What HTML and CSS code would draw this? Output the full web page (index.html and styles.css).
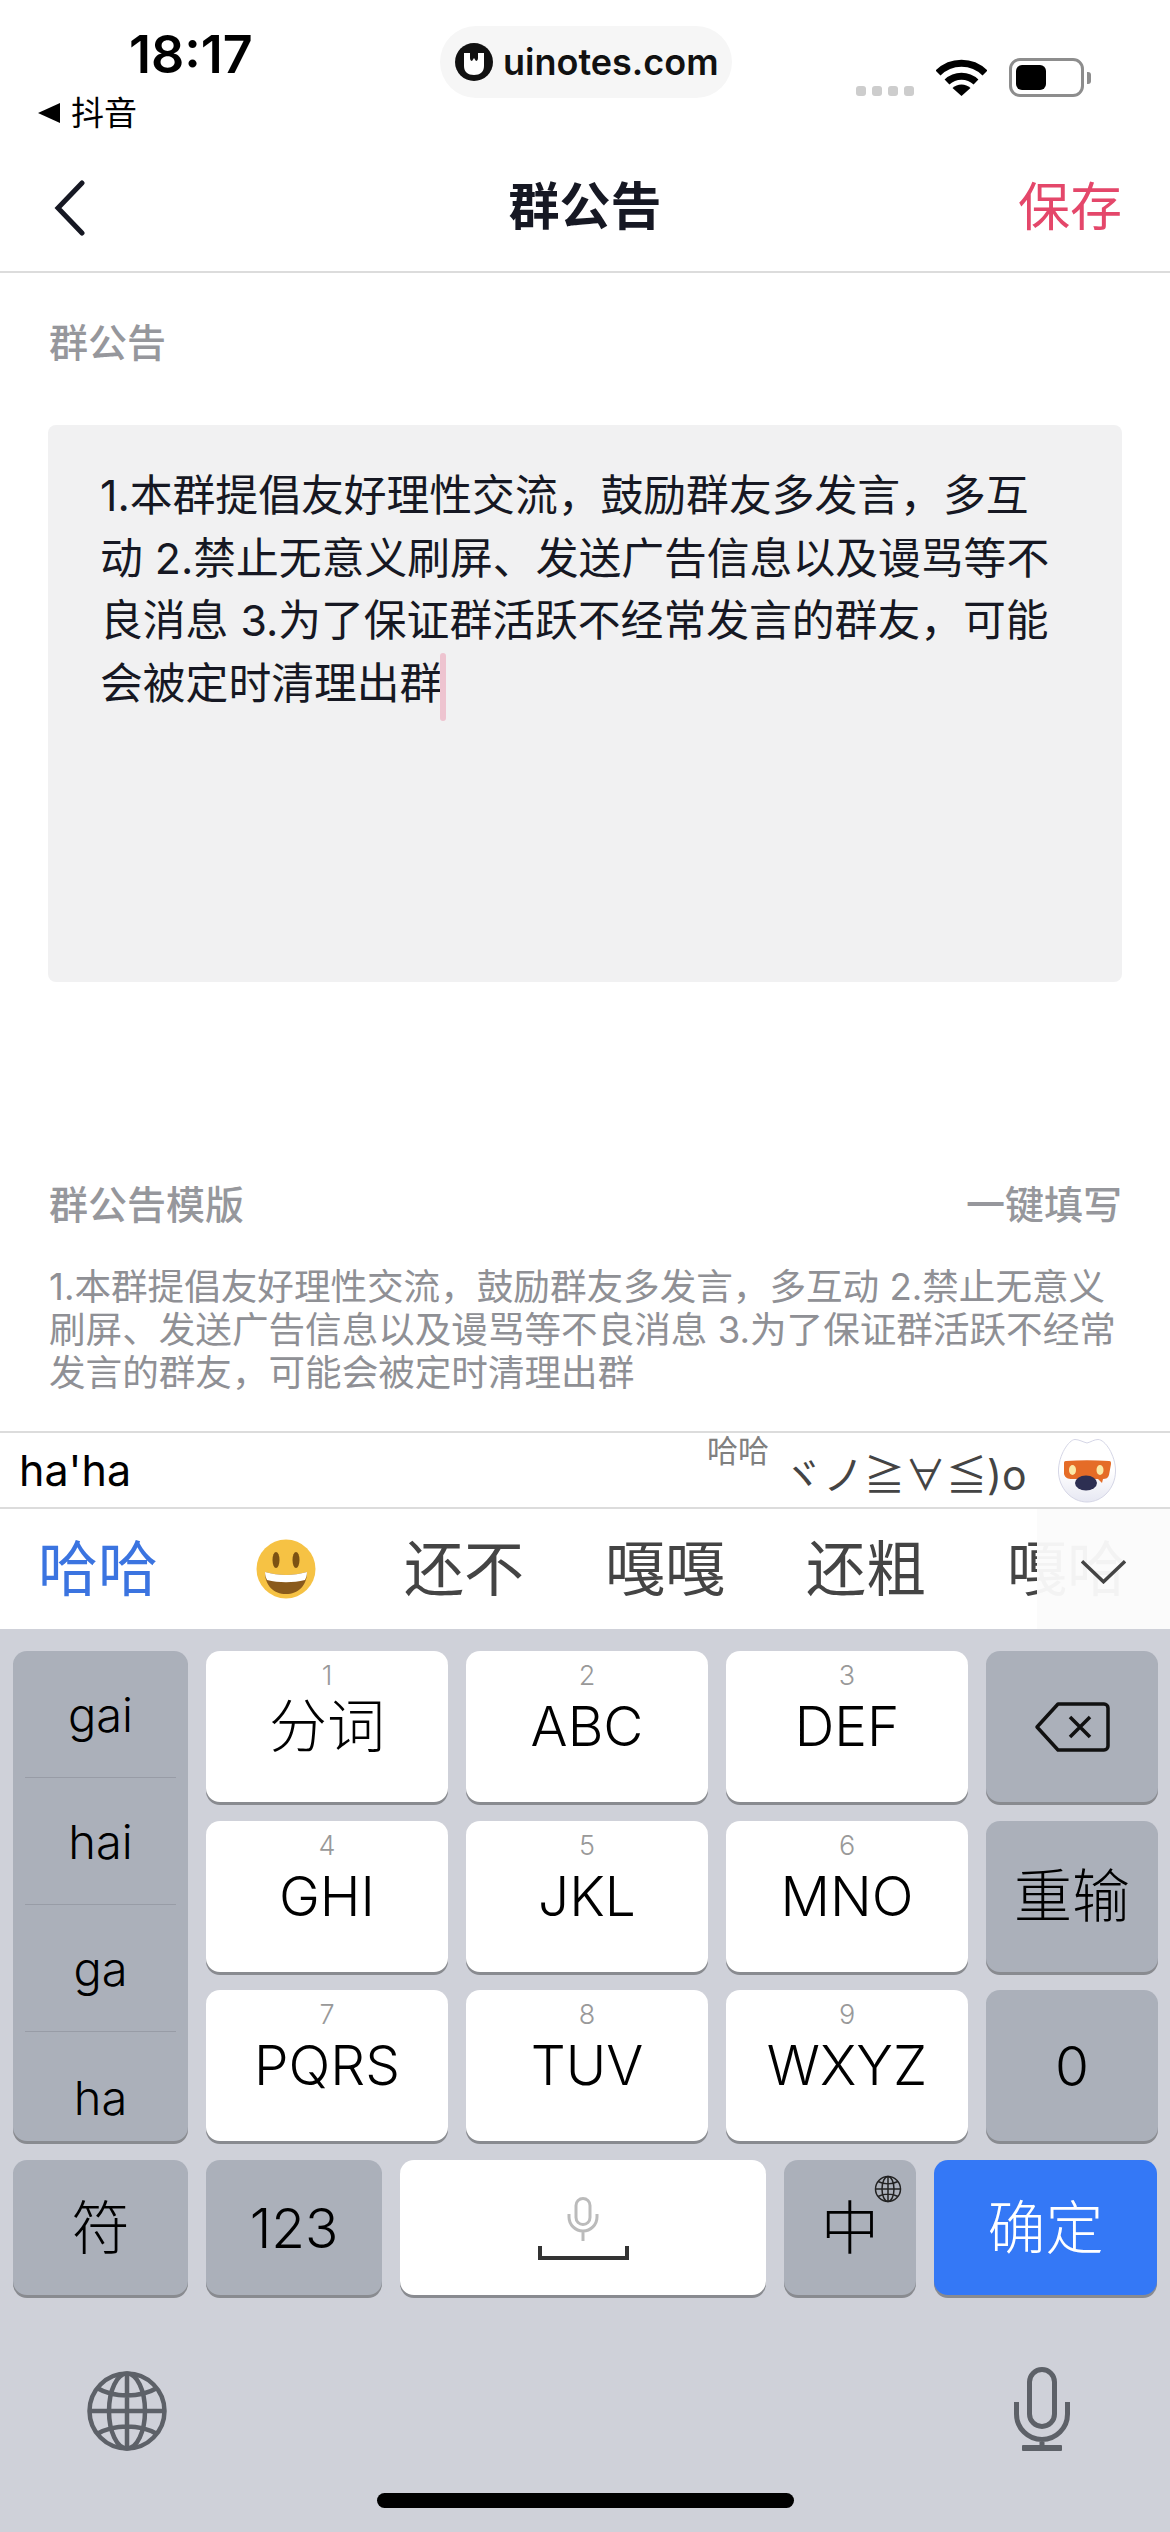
FILE: index.html
```html
<!DOCTYPE html>
<html lang="zh-CN">
  <head>
    <meta charset="UTF-8" />
    <title>群公告</title>
    <link rel="stylesheet" href="styles.css">
  </head>
  <body>
    <div class="status-bar">
      <div class="status-left">
        <div class="time">18:17</div>
        <div class="back-app"><span class="back-arrow"></span>抖音</div>
      </div>
      <div class="watermark">
        <svg class="wm-logo" viewBox="0 0 38 38">
          <circle cx="19" cy="19" r="19" fill="#111"/>
          <path d="M9 10h6v5c0 2 1 3 2 3l2-3 2 3c1 0 2-1 2-3v-5h6v13c0 6-4 9-10 9s-10-3-10-9z" fill="#fff"/>
        </svg>
        <span>uinotes.com</span>
      </div>
      <div class="status-right">
        <div class="signal"><i></i><i></i><i></i><i></i></div>
        <svg class="wifi" viewBox="0 0 51 37">
          <path d="M2 14a33 33 0 0 1 47 0" fill="none" stroke="#000" stroke-width="7"/>
          <path d="M11 23a21 21 0 0 1 29 0" fill="none" stroke="#000" stroke-width="7"/>
          <path d="M25.500 37l-9-8a13 13 0 0 1 18 0z" fill="#000"/>
        </svg>
        <div class="battery"><div class="battery-fill"></div></div>
        <div class="battery-nub"></div>
      </div>
    </div>

    <div class="nav">
      <svg class="nav-back" viewBox="0 0 32 56">
        <path d="M29 3L5 28l24 25" fill="none" stroke="#161823" stroke-width="5" stroke-linecap="round"/>
      </svg>
      <h1>群公告</h1>
      <span class="save">保存</span>
    </div>

    <div class="content">
      <div class="label">群公告</div>
      <div class="editor">1.本群提倡友好理性交流，鼓励群友多发言，多互动 2.禁止无意义刷屏、发送广告信息以及谩骂等不良消息 3.为了保证群活跃不经常发言的群友，可能会被定时清理出群<span class="caret"></span></div>
      <div class="template-head">
        <span class="label">群公告模版</span>
        <span class="label">一键填写</span>
      </div>
      <p class="template-text">1.本群提倡友好理性交流，鼓励群友多发言，多互动 2.禁止无意义刷屏、发送广告信息以及谩骂等不良消息 3.为了保证群活跃不经常发言的群友，可能会被定时清理出群</p>
    </div>

    <div class="compose">
      <span class="pinyin">ha'ha</span>
      <span class="kaomoji-tag">哈哈</span>
      <span class="kaomoji">ヾノ≧∀≦)o</span>
      <svg class="mascot" viewBox="0 0 58 64">
        <defs>
          <linearGradient id="mascotBody" x1="0" y1="0" x2="0" y2="1">
            <stop offset="0.500" stop-color="#fff"/>
            <stop offset="1" stop-color="#e6e7f2"/>
          </linearGradient>
        </defs>
        <path d="M29 4C25 3 21 .5 17 .5 11 .5 .5 16 .5 32c0 17 13 31 28.500 31S57.500 49 57.500 32C57.500 16 47 .5 40 .5 36 .5 33 3 29 4z" fill="url(#mascotBody)" stroke="#d5d6e6"/>
        <path d="M8 22c14-1 28-1 43 0 2 0 2 1 2 3l-2 11c-1 3-3 4-6 4l-1 4-4-4H14c-4 0-7-1-8-5L6 25c0-2 0-3 2-3z" fill="#e56c27"/>
        <ellipse cx="14.500" cy="31" rx="3.500" ry="5" fill="#fbe9a6"/>
        <ellipse cx="42" cy="31" rx="3.500" ry="5" fill="#fbe9a6"/>
        <ellipse cx="28" cy="44" rx="11" ry="7.500" fill="#2d2f52"/>
      </svg>
    </div>

    <div class="candidates">
      <span class="cand active">哈哈</span>
      <svg class="emoji" viewBox="0 0 62 60">
        <circle cx="31" cy="30" r="29.500" fill="#f6c244"/>
        <ellipse cx="21" cy="21" rx="3.500" ry="8" fill="#7d5213"/>
        <ellipse cx="41" cy="21" rx="3.500" ry="8" fill="#7d5213"/>
        <path d="M10 33c14 4 28 4 42 0 0 14-9 22-21 22S10 47 10 33z" fill="#8a5a1c"/>
        <path d="M10 33c14 4 28 4 42 0 0 3-1 6-2 8-12 3-26 3-38 0-1-2-2-5-2-8z" fill="#fff"/>
      </svg>
      <span class="cand">还不</span>
      <span class="cand">嘎嘎</span>
      <span class="cand">还粗</span>
      <span class="cand">嘎哈</span>
      <div class="cand-more">
        <svg viewBox="0 0 46 24">
          <path d="M1 1l22 21L45 1" fill="none" stroke="#444" stroke-width="3.500"/>
        </svg>
      </div>
    </div>

    <div class="keyboard">
      <div class="keys">
        <div class="syllables key-gray">
          <div class="syl">gai</div>
          <div class="syl">hai</div>
          <div class="syl">ga</div>
          <div class="syl">ha</div>
        </div>
        <div class="key"><small>1</small><b class="zh">分词</b></div>
        <div class="key"><small>2</small><b>ABC</b></div>
        <div class="key"><small>3</small><b>DEF</b></div>
        <div class="key-gray key-mid">
          <svg class="backspace" viewBox="0 0 76 50">
            <path d="M24 2h46a4 4 0 0 1 4 4v38a4 4 0 0 1-4 4H24L3 25z" fill="none" stroke="#111" stroke-width="3.500" stroke-linejoin="round"/>
            <path d="M36 15l20 20M56 15L36 35" fill="none" stroke="#111" stroke-width="3.500"/>
          </svg>
        </div>
        <div class="key"><small>4</small><b>GHI</b></div>
        <div class="key"><small>5</small><b>JKL</b></div>
        <div class="key"><small>6</small><b>MNO</b></div>
        <div class="key-gray key-mid"><b class="zh">重输</b></div>
        <div class="key"><small>7</small><b>PQRS</b></div>
        <div class="key"><small>8</small><b>TUV</b></div>
        <div class="key"><small>9</small><b>WXYZ</b></div>
        <div class="key-gray key-mid"><b>0</b></div>
      </div>
      <div class="bottom-row">
        <div class="key-gray key-mid k-sym"><b class="zh">符</b></div>
        <div class="key-gray key-mid k-num"><b>123</b></div>
        <div class="k-space">
          <svg class="space-mic" viewBox="0 0 32 44">
            <rect x="9" y="1.500" width="14" height="26" rx="7" fill="none" stroke="#bbb" stroke-width="3"/>
            <path d="M2 17v3a14 14 0 0 0 28 0v-3M16 34v10" fill="none" stroke="#bbb" stroke-width="3"/>
          </svg>
          <div class="space-bracket"></div>
        </div>
        <div class="key-gray key-mid k-lang">
          <b class="zh">中</b>
          <svg class="lang-globe" viewBox="0 0 28 28">
            <g fill="none" stroke="#222" stroke-width="1.500">
              <circle cx="14" cy="14" r="12.500"/>
              <ellipse cx="14" cy="14" rx="6" ry="12.500"/>
              <path d="M14 1.500v25M1.500 14h25M4 6.500c6 3 14 3 20 0M4 21.500c6-3 14-3 20 0"/>
            </g>
          </svg>
        </div>
        <div class="key-mid k-ok"><b class="zh">确定</b></div>
      </div>
      <div class="kb-tools">
        <svg class="tool-globe" viewBox="0 0 80 80">
          <g fill="none" stroke="#5d6168" stroke-width="4.500">
            <circle cx="40" cy="40" r="37.500"/>
            <ellipse cx="40" cy="40" rx="18" ry="37.500"/>
            <path d="M40 2.500v75M2.500 40h75M10 17c17 10 43 10 60 0M10 63c17-10 43-10 60 0"/>
          </g>
        </svg>
        <svg class="tool-mic" viewBox="0 0 56 84">
          <rect x="15.500" y="2.500" width="25" height="57" rx="12.500" fill="none" stroke="#5d6168" stroke-width="5"/>
          <path d="M2.500 35v12a25.500 25.500 0 0 0 51 0V35M28 72v8" fill="none" stroke="#5d6168" stroke-width="5"/>
          <rect x="8" y="78" width="40" height="6" rx="1" fill="#5d6168"/>
        </svg>
      </div>
      <div class="home-bar"></div>
    </div>
  </body>
</html>
```

FILE: styles.css
```css
* {
  box-sizing: border-box;
}

body {
  margin: 0;
  width: 1170px;
  height: 2532px;
  overflow: hidden;
  display: flex;
  flex-direction: column;
  background: #fff;
  color: #161823;
  font-family: Inter, "Noto Sans CJK SC", sans-serif;
}

/* status bar */
.status-bar {
  height: 132px;
  flex-shrink: 0;
  display: grid;
  grid-template-columns: 440px 292px 1fr;
  color: #000;
}

.status-left {
  padding: 26px 0 0 38px;
}

.time {
  margin-left: 91px;
  font-size: 52px;
  line-height: 58px;
  font-weight: 600;
}

.back-app {
  margin-top: 9px;
  display: flex;
  align-items: center;
  gap: 11px;
  font-size: 33px;
  line-height: 40px;
}

.back-arrow {
  width: 0;
  height: 0;
  border-top: 10px solid transparent;
  border-bottom: 10px solid transparent;
  border-right: 22px solid #000;
}

.watermark {
  margin-top: 26px;
  height: 72px;
  display: flex;
  align-items: center;
  padding-left: 15px;
  gap: 10px;
  border-radius: 36px;
  background: #f6f6f6;
  font-size: 36px;
  font-weight: 600;
  color: #111;
}

.wm-logo {
  width: 38px;
  height: 38px;
}

.status-right {
  padding: 58px 0 0 124px;
  display: flex;
  align-items: flex-start;
}

.signal {
  margin-top: 28px;
  display: flex;
  gap: 6px;
}

.signal i {
  width: 10px;
  height: 10px;
  border-radius: 3px;
  background: #cdcdcd;
}

.wifi {
  width: 51px;
  height: 37px;
  margin: 1px 0 0 22px;
}

.battery {
  width: 75px;
  height: 39px;
  margin-left: 22px;
  padding: 4px;
  border: 3px solid #8d8d8d;
  border-radius: 11px;
}

.battery-fill {
  width: 30px;
  height: 100%;
  border-radius: 6px;
  background: #000;
}

.battery-nub {
  width: 4px;
  height: 12px;
  margin: 14px 0 0 3px;
  border-radius: 0 3px 3px 0;
  background: #8d8d8d;
}

/* nav */
.nav {
  height: 141px;
  flex-shrink: 0;
  position: relative;
  display: flex;
  align-items: center;
  justify-content: center;
  padding-top: 10px;
  border-bottom: 2px solid #dcdcdc;
}

.nav h1 {
  margin: 0;
  font-size: 51px;
  line-height: 60px;
  font-weight: 700;
}

.nav-back {
  position: absolute;
  left: 53px;
  top: 48px;
  width: 32px;
  height: 56px;
}

.save {
  position: absolute;
  right: 48px;
  top: 46px;
  font-size: 52px;
  line-height: 60px;
  color: #e4476a;
}

/* content */
.content {
  flex: 1;
  padding: 0 48px;
}

.label {
  font-size: 39px;
  line-height: 46px;
  font-weight: 500;
  color: #96979c;
}

.content > .label {
  margin: 47px 0 0 1px;
}

.editor {
  height: 557px;
  margin-top: 59px;
  padding: 40px 70px 0 52px;
  border-radius: 8px;
  background: #f1f1f2;
  font-size: 42.800px;
  line-height: 62.500px;
}

.caret {
  display: inline-block;
  width: 6px;
  height: 68px;
  margin-left: -2px;
  vertical-align: middle;
  border-radius: 3px;
  background: #eec4d0;
}

.template-head {
  margin: 200px 0 0 1px;
  display: flex;
  justify-content: space-between;
}

.template-text {
  margin: 38px -4px 0 1px;
  font-size: 36.600px;
  line-height: 43px;
  color: #8f9095;
}

/* composition row */
.compose {
  height: 78px;
  flex-shrink: 0;
  position: relative;
  display: flex;
  align-items: center;
  padding-left: 19px;
  border-top: 2px solid #dcdcdc;
  border-bottom: 2px solid #dcdcdc;
  color: #000;
}

.pinyin {
  font-size: 43px;
}

.kaomoji-tag {
  position: absolute;
  left: 707px;
  top: -2px;
  font-size: 31px;
  line-height: 40px;
  color: #808080;
}

.kaomoji {
  position: absolute;
  left: 782px;
  top: 14px;
  font-size: 41px;
  line-height: 56px;
  color: #444;
}

.mascot {
  position: absolute;
  left: 1058px;
  top: 6px;
  width: 58px;
  height: 64px;
}

/* candidates */
.candidates {
  height: 120px;
  flex-shrink: 0;
  position: relative;
  overflow: hidden;
  display: flex;
  align-items: center;
  gap: 81px;
  padding-left: 38px;
}

.cand {
  flex-shrink: 0;
  font-size: 60px;
  line-height: 70px;
  color: #444;
}

.cand.active {
  color: #3b74e0;
}

.emoji {
  flex-shrink: 0;
  width: 62px;
  height: 60px;
  margin: 0 6px 0 16px;
}

.cand-more {
  position: absolute;
  left: 1037px;
  top: 0;
  bottom: 0;
  right: 0;
  display: flex;
  align-items: center;
  padding: 6px 0 0 44px;
  background: rgba(251, 251, 251, 0.96);
}

.cand-more svg {
  width: 45px;
  height: 24px;
}

/* keyboard */
.keyboard {
  height: 903px;
  flex-shrink: 0;
  position: relative;
  padding: 22px 13px 0;
  background: #cfd1d9;
  color: #000;
}

.keys {
  display: grid;
  grid-template-columns: 175px 242px 242px 242px 172px;
  grid-auto-rows: 151px;
  gap: 18.500px 18px;
}

.key,
.key-gray,
.k-space,
.k-ok {
  border-radius: 14px;
  box-shadow: 0 3px 0 #898b90;
}

.key {
  display: flex;
  flex-direction: column;
  align-items: center;
  padding-top: 12px;
  background: #fff;
}

.key small {
  font-size: 27px;
  line-height: 26px;
  font-weight: 300;
  color: #999;
}

.key b,
.key-mid b {
  font-size: 55px;
  line-height: 56px;
  font-weight: 300;
}

.key b.zh,
.key-mid b.zh {
  font-size: 58px;
}

.key b {
  margin-top: 9px;
}

.key-gray {
  background: #abb0ba;
}

.key-mid {
  display: flex;
  align-items: center;
  justify-content: center;
}

.backspace {
  width: 76px;
  height: 50px;
}

.syllables {
  grid-row: span 3;
  padding: 0 12px;
}

.syl {
  height: 127px;
  display: flex;
  align-items: center;
  justify-content: center;
  font-size: 47px;
  font-weight: 300;
  border-bottom: 1px solid #989ca6;
}

.syl:last-child {
  height: 112px;
  padding-top: 18px;
  border-bottom: 0;
}

.bottom-row {
  height: 135px;
  margin-top: 19px;
  display: flex;
  gap: 18px;
}

.k-sym {
  width: 175px;
}

.k-num {
  width: 176px;
}

.k-space {
  width: 366px;
  display: flex;
  flex-direction: column;
  align-items: center;
  padding-top: 37px;
  background: #fff;
}

.space-mic {
  width: 32px;
  height: 44px;
}

.space-bracket {
  width: 91px;
  height: 14px;
  margin-top: 5px;
  border: 4px solid #333;
  border-top: 0;
}

.k-lang {
  width: 132px;
  position: relative;
}

.lang-globe {
  position: absolute;
  top: 15px;
  right: 14px;
  width: 28px;
  height: 28px;
}

.k-ok {
  width: 223px;
  background: #3478f6;
  color: #fff;
}

.kb-tools {
  display: flex;
  justify-content: space-between;
  align-items: flex-end;
  padding: 0 87px 0 74px;
  margin-top: 72px;
  height: 84px;
}

.tool-globe {
  width: 80px;
  height: 80px;
}

.tool-mic {
  width: 56px;
  height: 84px;
}

.home-bar {
  position: absolute;
  left: 377px;
  top: 864px;
  width: 417px;
  height: 15px;
  border-radius: 8px;
  background: #000;
}
```
